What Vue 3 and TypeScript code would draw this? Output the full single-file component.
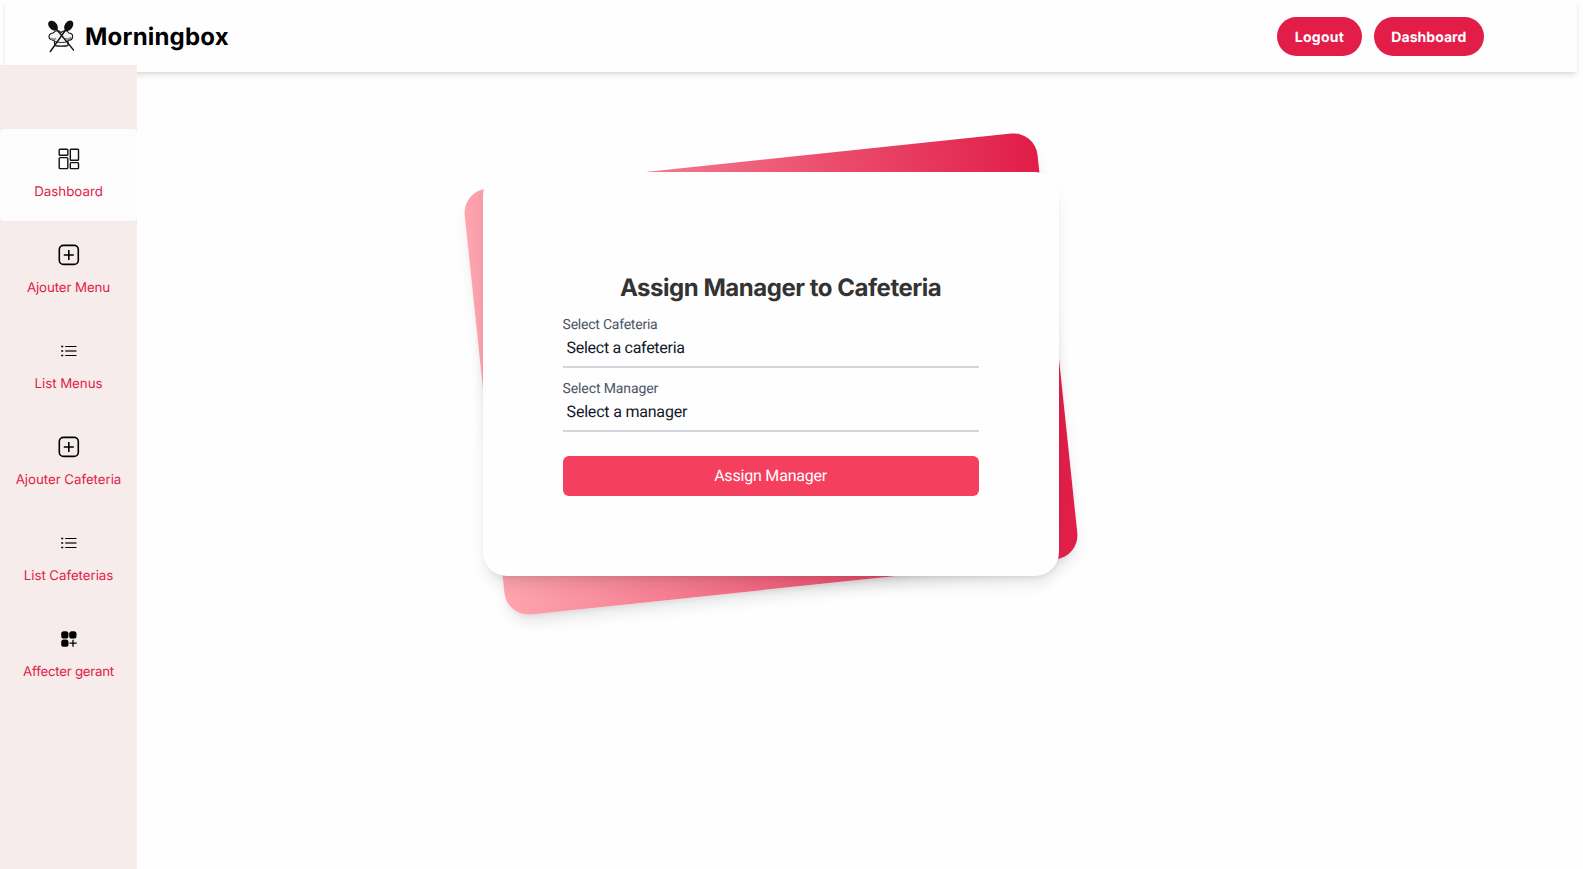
<script setup lang="ts">
import { ref } from 'vue'

type IconName = 'dashboard' | 'add' | 'list' | 'assign'

interface MenuItem {
  label: string
  icon: IconName
  tracking: number
}

const items: MenuItem[] = [
  { label: 'Dashboard', icon: 'dashboard', tracking: 0 },
  { label: 'Ajouter Menu', icon: 'add', tracking: -0.13 },
  { label: 'List Menus', icon: 'list', tracking: -0.06 },
  { label: 'Ajouter Cafeteria', icon: 'add', tracking: -0.06 },
  { label: 'List Cafeterias', icon: 'list', tracking: -0.07 },
  { label: 'Affecter gerant', icon: 'assign', tracking: -0.28 },
]
const active = ref(0)
const cafeteria = ref('')
const manager = ref('')
</script>

<template>
  <div class="page">
    <header class="topbar">
      <div class="brand">
        <svg class="logo" viewBox="0 0 26 34" fill="none" stroke="#111">
          <path d="M6 21C0 22 -1 14.5 5 14C8 11 11 11 13 13.5C16 11 19 11 21 14C27 14.5 25 22 20 21L20 26.5Q13 28 7 26.5Z" fill="#f4f4f4" stroke-width="1.1" />
          <path d="M2.5 19Q5 21 8 19.5M23.5 18.5Q20 21 17 19.5" stroke="#888" stroke-width="1.6" />
          <path d="M7 22.5Q13 24.5 20 22.5M7 26.6Q13 28 20 26.6" stroke="#333" stroke-width="1.1" />
          <path d="M7.5 9L26 31.5M19 9L2 33" stroke-width="1.4" />
          <ellipse cx="5" cy="6.7" rx="3.9" ry="5.8" transform="rotate(-42 5 6.7)" fill="#111" stroke="none" />
          <ellipse cx="20.7" cy="6.7" rx="3.9" ry="5.8" transform="rotate(35 20.7 6.7)" fill="#111" stroke="none" />
        </svg>
        <span class="name">Morningbox</span>
      </div>
      <nav class="actions">
        <button type="button" class="pill logout">Logout</button>
        <button type="button" class="pill dash">Dashboard</button>
      </nav>
    </header>

    <div class="body">
      <aside class="sidebar">
        <a
          v-for="(item, i) in items"
          :key="item.label"
          class="item"
          :class="{ active: i === active }"
          @click="active = i"
        >
          <svg v-if="item.icon === 'dashboard'" class="icon" viewBox="0 0 24 24" fill="none" stroke="#111" stroke-width="1.4">
            <rect x="2.2" y="2.3" width="8.6" height="6" rx="0.8" />
            <rect x="13.3" y="2.3" width="8.2" height="11" rx="0.8" />
            <rect x="2.2" y="10.6" width="8.6" height="11" rx="0.8" />
            <rect x="13.3" y="15.6" width="8.2" height="6" rx="0.8" />
          </svg>
          <svg v-else-if="item.icon === 'add'" class="icon" viewBox="0 0 24 24" fill="none" stroke="#000" stroke-width="1.6">
            <rect x="2.3" y="2.4" width="19" height="19" rx="4.2" />
            <path d="M11.8 7v10M6.800 12h10" />
          </svg>
          <svg v-else-if="item.icon === 'list'" class="icon" viewBox="0 0 24 24">
            <path d="M8.2 7.5h11.3M8.2 16.5h11.3" stroke="#000" stroke-width="1.2" />
            <path d="M8.2 12h11.3" stroke="#655f60" stroke-width="2" />
            <path d="M4.2 7.5h2M4.2 12h2M4.2 16.5h2" stroke="#000" stroke-width="1.7" />
          </svg>
          <svg v-else class="icon" viewBox="0 0 24 24">
            <rect x="4.2" y="4.2" width="7.3" height="7.4" rx="2.6" />
            <rect x="12.2" y="4.2" width="7.3" height="7.4" rx="2.6" />
            <rect x="4.2" y="12.4" width="7.3" height="7.4" rx="2.6" />
            <path d="M16 12.7v7M12.5 16.2h7.2" stroke="#000" stroke-width="1.3" />
          </svg>
          <span class="label" :style="{ letterSpacing: item.tracking + 'px' }">{{ item.label }}</span>
        </a>
      </aside>

      <main class="content">
        <div class="stack">
          <div class="tilt"></div>
          <form class="card" @submit.prevent>
            <h1>Assign Manager to Cafeteria</h1>
            <div class="field place">
              <label for="cafeteria">Select Cafeteria</label>
              <select id="cafeteria" v-model="cafeteria">
                <option value="">Select a cafeteria</option>
              </select>
            </div>
            <div class="field person">
              <label for="manager">Select Manager</label>
              <select id="manager" v-model="manager">
                <option value="">Select a manager</option>
              </select>
            </div>
            <button type="submit" class="submit">Assign Manager</button>
          </form>
        </div>
      </main>
    </div>
  </div>
</template>

<style>
body {
  background: #fefefe;
  overflow: hidden;
}
</style>

<style scoped>
.page,
.page * {
  box-sizing: border-box;
  text-rendering: geometricPrecision;
}
.page {
  height: 869px;
  display: flex;
  flex-direction: column;
  overflow: hidden;
  font-family: Inter, sans-serif;
}
.topbar {
  height: 72px;
  flex: none;
  margin: 0 6px 0 5px;
  padding: 0 93px 0 43px;
  display: flex;
  align-items: center;
  justify-content: space-between;
  background: #fefefe;
  box-shadow: 0 4px 6px -1px rgba(0, 0, 0, 0.1), 0 2px 4px -2px rgba(0, 0, 0, 0.1);
}
.brand {
  display: flex;
  align-items: center;
  gap: 11px;
}
.logo {
  width: 26px;
  height: 34px;
}
.name {
  font-size: 24px;
  line-height: 32px;
  font-weight: 700;
  letter-spacing: 0.2px;
  color: #000;
  padding-top: 2px;
}
.actions {
  display: flex;
  gap: 12px;
  padding-top: 1px;
}
.pill {
  height: 39px;
  border: 0;
  padding: 2px 0 0;
  border-radius: 20px;
  background: #e11d48;
  color: #fff;
  font: 700 14px/20px Inter, sans-serif;
}
.logout {
  width: 84.5px;
  letter-spacing: 0.28px;
}
.dash {
  width: 110.3px;
  letter-spacing: 0.05px;
}
.body {
  flex: 1;
  display: flex;
  min-height: 0;
}
.sidebar {
  width: 137px;
  flex: none;
  margin-top: -7px;
  padding-top: 64px;
  display: flex;
  flex-direction: column;
  gap: 4px;
  background: #f6eceb;
  z-index: 1;
}
.item {
  height: 92px;
  flex: none;
  padding-top: 18px;
  display: flex;
  flex-direction: column;
  align-items: center;
  gap: 11px;
  border-radius: 4px;
}
.item.active {
  background: #fcfcfc;
}
.icon {
  width: 24px;
  height: 24px;
  flex: none;
}
.label {
  font-size: 13.33px;
  line-height: 20px;
  color: #e11d48;
  white-space: nowrap;
}
.content {
  flex: 1;
  padding: 100.4px 0 0 345.6px;
}
.stack {
  position: relative;
  width: 576px;
  height: 404px;
}
.tilt {
  position: absolute;
  inset: -12px 0;
  border-radius: 24px;
  background: linear-gradient(to right, #fda4af, #e11d48);
  box-shadow: 0 10px 15px -3px rgba(0, 0, 0, 0.1), 0 4px 6px -4px rgba(0, 0, 0, 0.1);
  transform: rotate(-6deg);
}
.card {
  position: relative;
  height: 404px;
  padding: 100px 80px 0;
  border-radius: 24px;
  background: #fefefe;
  box-shadow: 0 10px 15px -3px rgba(0, 0, 0, 0.1), 0 4px 6px -4px rgba(0, 0, 0, 0.1);
}
h1 {
  margin: 0 0 10px 20px;
  font-size: 24px;
  line-height: 32px;
  font-weight: 700;
  letter-spacing: -0.47px;
  color: #333;
  text-align: center;
}
.field {
  height: 54px;
  margin-bottom: 10px;
  border-bottom: 2px solid #d1d5db;
}
.field label {
  display: block;
  padding-top: 0.6px;
  font: 400 14px/20px Roboto, sans-serif;
  color: #4b5563;
}
.field select {
  display: block;
  width: 100%;
  height: 24px;
  margin-top: 1px;
  padding: 0;
  border: 0;
  outline: 0;
  appearance: none;
  background: transparent;
  text-indent: 4px;
  font: 400 16px/24px Roboto, sans-serif;
  color: #111827;
}
.place label {
  letter-spacing: -0.23px;
}
.place select {
  letter-spacing: -0.29px;
}
.person label {
  letter-spacing: -0.12px;
}
.person select {
  letter-spacing: -0.2px;
}
.submit {
  display: block;
  width: 100%;
  height: 40px;
  margin-top: 24px;
  border: 0;
  border-radius: 6px;
  background: #f43f5e;
  color: #fff;
  font: 400 16px/24px Roboto, sans-serif;
  letter-spacing: -0.2px;
}
</style>
